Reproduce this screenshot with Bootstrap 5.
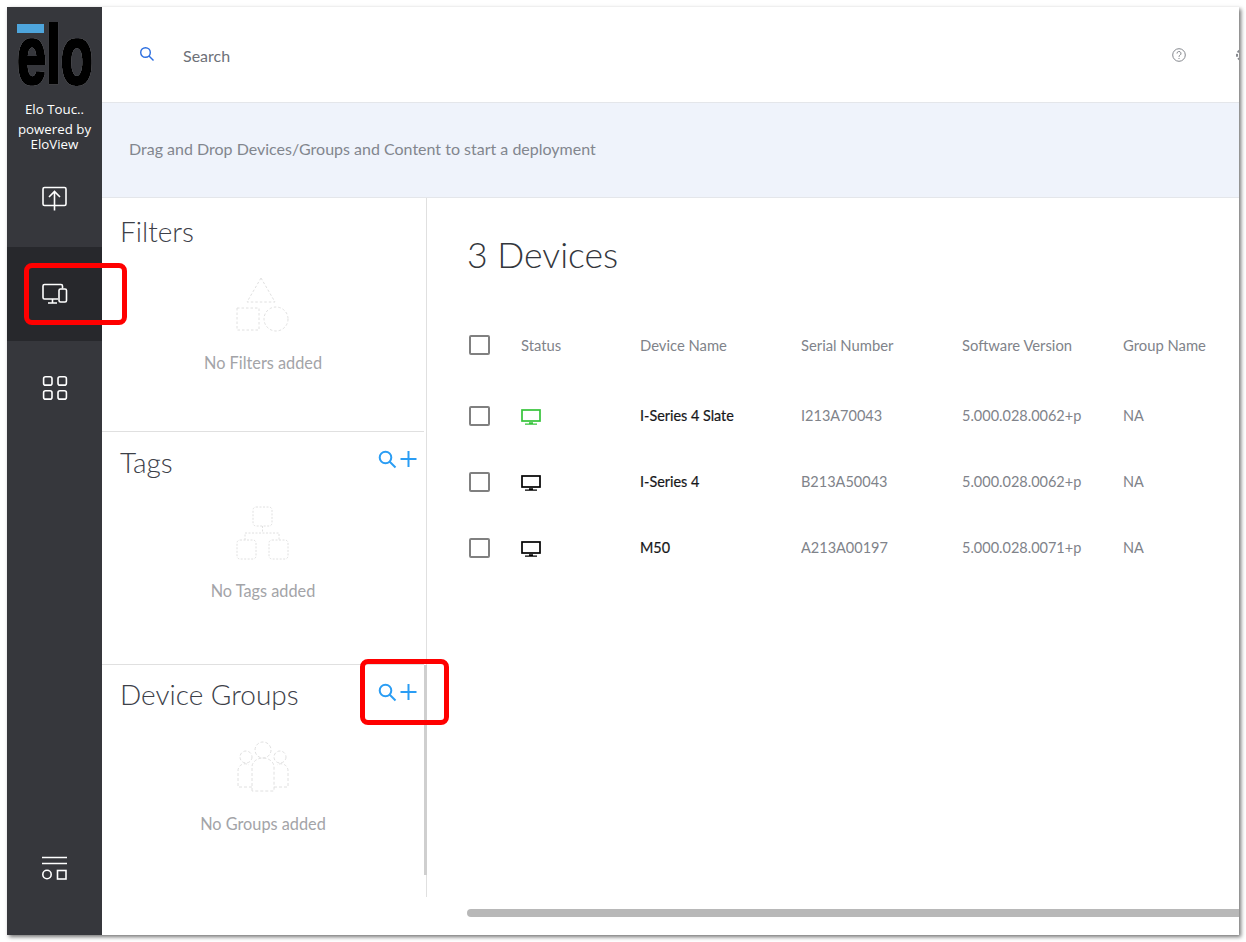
<!DOCTYPE html>
<html lang="en">
<head>
<meta charset="utf-8">
<title>Elo Devices</title>
<link href="https://cdn.jsdelivr.net/npm/bootstrap@5.3.0/dist/css/bootstrap.min.css" rel="stylesheet">
<style>
html,body{height:100%;background:#fff;overflow:hidden}
body{font-family:Lato,"Liberation Sans",sans-serif;font-size:15px;color:#3c4048}
.app-frame{position:relative;margin:7px 0 0 7px;width:1232px;height:928px;box-shadow:2px 2px 4px rgba(0,0,0,.55);background:#fff}
.side-rail{width:95px;background:#36373c;color:#fff;flex:none}
.rail-logo{height:145px;padding-top:17px;text-align:center;font-family:"Open Sans","Liberation Sans",sans-serif;font-size:13.3px;line-height:15px}
.rail-logo svg{display:block;margin:0 auto 16px 9px;overflow:visible}
.rail-logo .org{margin-bottom:5px}
.rail-item{height:94.5px;display:flex;align-items:center;justify-content:center}
.rail-item.active-item{background:#27282c}
.rail-foot{margin-top:auto;margin-bottom:19px}
.top-strip{height:96px;border-bottom:1px solid #e4e6ea;padding-left:37px;overflow:hidden;flex:none}
.search-ico{margin-top:-2px}
.search-label{margin-left:28px;margin-top:2px;color:#6d7178;font-size:16px}
.help-ico{margin-left:auto;margin-right:49px}
.gear-ico{margin-right:-10px;flex:none}
.drop-banner{height:95px;background:#eff3fb;border-bottom:1px solid #e4e6ea;padding:0 0 2px 27px;color:#82868e;font-size:16px;flex:none}
.filter-col{width:325px;height:699px;border-right:1px solid #e0e0e0;position:relative;flex:none}
.filter-block{width:322px;padding:0 6px 0 18px;border-bottom:1px solid #e0e0e0;height:234px}
.filter-block.block-b{height:233px}
.filter-block.block-c{border-bottom:0;height:231px}
.block-head{height:66px;padding-top:16px;font-size:28px;font-weight:300;line-height:34px;color:#3c4048}
.block-b .block-head{padding-top:13px}
.block-c .block-head{padding-top:12px}
.block-b .block-head svg{margin-top:5px}
.block-c .block-head svg{margin-top:6px}
.empty-box{text-align:center;color:#a3a4a8;font-size:16.3px;margin-left:-7px;padding-top:13px}
.block-b .empty-box{padding-top:8px}
.block-c .empty-box{padding-top:10px}
.empty-box svg{display:block;margin:0 auto 18px}
.block-b .empty-box svg,.block-c .empty-box svg{margin-bottom:19px}
.empty-cap{display:block;margin-right:5px}
.v-thumb{position:absolute;right:-1px;top:467px;width:3px;height:210px;background:#cfcfcf}
.devices-pane{flex:1;min-width:0;padding-left:41px;overflow:hidden;position:relative}
.devices-title{font-size:35.6px;font-weight:300;color:#34373c;line-height:42px;margin:36px 0 0 -1px;height:76px}
.device-table{table-layout:fixed;width:772px;margin:0;--bs-table-bg:transparent}
.device-table td,.device-table th{padding:0;vertical-align:middle;font-weight:400;color:#80838a;height:66px;white-space:nowrap;overflow:hidden}
.device-table th{font-size:14.8px}
.device-table td{font-size:14.5px}
.device-table thead th{height:73px;padding-bottom:3px}
.device-table td.dev-name{color:#17181a;font-size:14.4px;-webkit-text-stroke:.2px #17181a}
.device-table .form-check-input{width:21px;height:20px;margin:0 0 0 1px;border:2px solid #808080;border-radius:2px;display:block;background:#fff}
.h-thumb{position:absolute;left:40px;right:0;bottom:18px;height:8px;background:#b8b8b8;border-radius:4px 0 0 4px}
.note-box{position:absolute;border:5px solid #f00;border-radius:8px;pointer-events:none}
.note-a{left:17px;top:256px;width:103px;height:62px}
.note-b{left:353px;top:652px;width:89px;height:66px}
</style>
</head>
<body>
<div class="app-frame d-flex">
  <nav class="side-rail d-flex flex-column">
    <div class="rail-logo">
      <svg width="78" height="62" viewBox="0 0 78 62">
        <defs><filter id="logoEdge" x="-10%" y="-10%" width="120%" height="120%">
          <feMorphology in="SourceAlpha" operator="dilate" radius="0.800" result="fat"/>
          <feMorphology in="SourceAlpha" operator="dilate" radius="1.400" result="fatter"/>
          <feFlood flood-color="#77787d" result="rim"/>
          <feComposite in="rim" in2="fatter" operator="in" result="rimShape"/>
          <feFlood flood-color="#040404" result="ink"/>
          <feComposite in="ink" in2="fat" operator="in" result="inkShape"/>
          <feMerge><feMergeNode in="rimShape"/><feMergeNode in="inkShape"/></feMerge>
        </filter></defs>
        <text x="1" y="60" font-family="Liberation Sans" font-weight="700" font-size="84" textLength="76" lengthAdjust="spacingAndGlyphs" fill="#050505" filter="url(#logoEdge)">elo</text>
        <rect x="1" y="0" width="27" height="9" fill="#4ea5dc"/>
      </svg>
      <div class="org">Elo Touc..</div>
      <div>powered by<br>EloView</div>
    </div>
    <div class="rail-item">
      <svg width="28" height="28" viewBox="0 0 28 28" fill="none" stroke="#fff" stroke-width="1.6"><rect x="2" y="2.500" width="23" height="18" rx="1.500"/><path d="M13.500 25.500V7M8 12l5.500-5.500L19 12"/></svg>
    </div>
    <div class="rail-item active-item">
      <svg width="28" height="24" viewBox="0 0 28 24" fill="none" stroke="#fff" stroke-width="1.6"><path d="M17 17H3.500A1.500 1.500 0 0 1 2 15.500V4a1.500 1.500 0 0 1 1.500-1.500H20A1.500 1.500 0 0 1 21.500 4v2.500"/><path d="M11.500 17v4M7 21h9"/><rect x="18" y="7" width="7.500" height="13" rx="1.500"/></svg>
    </div>
    <div class="rail-item">
      <svg width="28" height="28" viewBox="0 0 28 28" fill="none" stroke="#fff" stroke-width="1.6"><rect x="2.600" y="2.750" width="8.400" height="8.400" rx="2"/><rect x="17" y="2.750" width="8.400" height="8.400" rx="2"/><rect x="2.600" y="16.750" width="8.400" height="8.400" rx="2"/><rect x="17" y="16.750" width="8.400" height="8.400" rx="2"/></svg>
    </div>
    <div class="rail-item rail-foot">
      <svg width="28" height="26" viewBox="0 0 28 26" fill="none" stroke="#fff" stroke-width="1.6"><path d="M1 1.500h25M1 7.500h25"/><circle cx="6" cy="18.500" r="4.200"/><rect x="16.500" y="14.500" width="8.500" height="8.500"/></svg>
    </div>
  </nav>
  <main class="flex-grow-1 d-flex flex-column" style="min-width:0">
    <div class="top-strip d-flex align-items-center">
      <svg class="search-ico" width="16" height="16" viewBox="0 0 16 16" fill="none" stroke="#2d6fe0" stroke-width="1.400"><circle cx="6.500" cy="6.500" r="4.800"/><path d="M10 10l4.500 4.500"/></svg>
      <span class="search-label">Search</span>
      <svg class="help-ico" width="14" height="14" viewBox="0 0 14 14" fill="none" stroke="#85888e" stroke-width="1"><circle cx="7" cy="7" r="6.300"/><path d="M5 5.500a2 2 0 1 1 3 1.700c-.7.400-1 .8-1 1.600M7 10v1"/></svg>
      <svg class="gear-ico" width="14" height="14" viewBox="0 0 14 14" fill="none" stroke="#85888e" stroke-width="2"><circle cx="7" cy="7" r="5" stroke-dasharray="3 1.500"/></svg>
    </div>
    <div class="drop-banner d-flex align-items-center">Drag and Drop Devices/Groups and Content to start a deployment</div>
    <div class="d-flex flex-grow-1" style="min-height:0">
      <aside class="filter-col">
        <section class="filter-block">
          <div class="block-head">Filters</div>
          <div class="empty-box">
            <svg width="60" height="56" viewBox="0 0 60 56" fill="none" stroke="#e0e0e0" stroke-dasharray="2.500 2"><path d="M25 1l14 24H11z"/><rect x="1" y="31" width="22" height="22"/><circle cx="40" cy="42" r="12"/></svg>
            <span class="empty-cap">No Filters added</span>
          </div>
        </section>
        <section class="filter-block block-b">
          <div class="block-head d-flex justify-content-between"><span>Tags</span>
            <svg width="40" height="20" viewBox="0 0 40 20" fill="none" stroke="#2a9df4" stroke-width="2"><circle cx="7.500" cy="7.500" r="5.800"/><path d="M11.500 11.500l6 6"/><path d="M30.500 1v16M22.500 9h16"/></svg>
          </div>
          <div class="empty-box">
            <svg width="60" height="54" viewBox="0 0 60 54" fill="none" stroke="#e0e0e0" stroke-dasharray="2 1.500"><rect x="17" y="1" width="19" height="19" rx="3"/><rect x="1" y="34" width="19" height="19" rx="3"/><rect x="33" y="34" width="19" height="19" rx="3"/><path d="M26.500 20v7M9 34v-7h34v7"/></svg>
            <span class="empty-cap">No Tags added</span>
          </div>
        </section>
        <section class="filter-block block-c">
          <div class="block-head d-flex justify-content-between"><span>Device Groups</span>
            <svg width="40" height="20" viewBox="0 0 40 20" fill="none" stroke="#2a9df4" stroke-width="2"><circle cx="7.500" cy="7.500" r="5.800"/><path d="M11.500 11.500l6 6"/><path d="M30.500 1v16M22.500 9h16"/></svg>
          </div>
          <div class="empty-box">
            <svg width="58" height="52" viewBox="0 0 58 52" fill="none" stroke="#e0e0e0" stroke-dasharray="3 2"><circle cx="26" cy="9" r="8"/><circle cx="9" cy="16" r="6"/><circle cx="43" cy="16" r="6"/><path d="M15 50V26a11 9 0 0 1 22 0v24zM15 46H1V30a7 7 0 0 1 11-6M37 46h14V30a7 7 0 0 0-11-6"/></svg>
            <span class="empty-cap">No Groups added</span>
          </div>
        </section>
        <div class="v-thumb"></div>
      </aside>
      <div class="devices-pane">
        <h1 class="devices-title">3 Devices</h1>
        <table class="table table-borderless device-table">
          <colgroup><col style="width:53px"><col style="width:119px"><col style="width:161px"><col style="width:161px"><col style="width:161px"><col style="width:117px"></colgroup>
          <thead><tr>
            <th><input class="form-check-input" type="checkbox" aria-label="Select all"></th>
            <th>Status</th><th>Device Name</th><th>Serial Number</th><th>Software Version</th><th>Group Name</th>
          </tr></thead>
          <tbody>
            <tr>
              <td><input class="form-check-input" type="checkbox" aria-label="Select"></td>
              <td><svg width="21" height="16" viewBox="0 0 21 16" fill="none" stroke="#35c43a" stroke-width="1.700"><rect x="1" y="1" width="18" height="11"/><path d="M4 15.200h12M8 13.800h4" stroke-width="1.200"/></svg></td>
              <td class="dev-name">I-Series 4 Slate</td><td>I213A70043</td><td>5.000.028.0062+p</td><td>NA</td>
            </tr>
            <tr>
              <td><input class="form-check-input" type="checkbox" aria-label="Select"></td>
              <td><svg width="21" height="16" viewBox="0 0 21 16" fill="none" stroke="#000" stroke-width="1.700"><rect x="1" y="1" width="18" height="11"/><path d="M4 15.200h12M8 13.800h4" stroke-width="1.200"/></svg></td>
              <td class="dev-name">I-Series 4</td><td>B213A50043</td><td>5.000.028.0062+p</td><td>NA</td>
            </tr>
            <tr>
              <td><input class="form-check-input" type="checkbox" aria-label="Select"></td>
              <td><svg width="21" height="16" viewBox="0 0 21 16" fill="none" stroke="#000" stroke-width="1.700"><rect x="1" y="1" width="18" height="11"/><path d="M4 15.200h12M8 13.800h4" stroke-width="1.200"/></svg></td>
              <td class="dev-name">M50</td><td>A213A00197</td><td>5.000.028.0071+p</td><td>NA</td>
            </tr>
          </tbody>
        </table>
        <div class="h-thumb"></div>
      </div>
    </div>
  </main>
  <div class="note-box note-a"></div>
  <div class="note-box note-b"></div>
</div>
<script src="https://cdn.jsdelivr.net/npm/bootstrap@5.3.0/dist/js/bootstrap.bundle.min.js"></script>
</body>
</html>
